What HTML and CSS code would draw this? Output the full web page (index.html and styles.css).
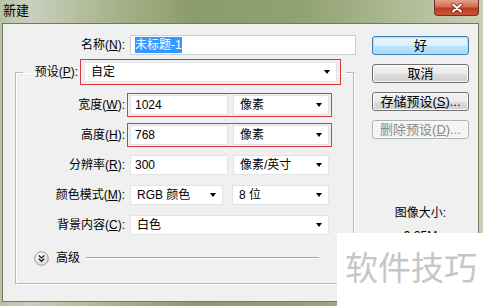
FILE: index.html
```html
<!DOCTYPE html>
<html lang="zh">
<head>
    <meta charset="UTF-8">
    <title>新建</title>
    <link rel="stylesheet" href="styles.css">
</head>
<body>
    <div class="window">
        <div class="titlebar">
            <span class="title">新建</span>
            <div class="close">
                <svg width="14" height="10" viewBox="0 0 14 10">
                    <path d="M3 1.5 L11 8.5 M11 1.5 L3 8.5" stroke="#5a2418" stroke-width="3.4" stroke-linecap="round"/>
                    <path d="M3 1.5 L11 8.5 M11 1.5 L3 8.5" stroke="#fff" stroke-width="2" stroke-linecap="round"/>
                </svg>
            </div>
        </div>

        <div class="client">
            <div class="left">
                <div class="row name-row">
                    <span class="lbl">名称(<u>N</u>):</span>
                    <div class="box">
                        <div class="field name-field"><span class="sel">未标题-1</span></div>
                    </div>
                </div>

                <!-- Preset group -->
                <fieldset class="group">
                    <legend>
                        <span class="lbl preset-lbl">预设(<u>P</u>):</span>
                        <span class="box red legend-box">
                            <span class="combo preset">自定<i class="arrow"></i></span>
                        </span>
                    </legend>

                    <div class="row">
                        <span class="lbl">宽度(<u>W</u>):</span>
                        <div class="box red">
                            <div class="field num">1024</div>
                            <div class="combo unit">像素<i class="arrow"></i></div>
                        </div>
                    </div>
                    <div class="row">
                        <span class="lbl">高度(<u>H</u>):</span>
                        <div class="box red">
                            <div class="field num">768</div>
                            <div class="combo unit">像素<i class="arrow"></i></div>
                        </div>
                    </div>
                    <div class="row">
                        <span class="lbl">分辨率(<u>R</u>):</span>
                        <div class="box">
                            <div class="field num">300</div>
                            <div class="combo unit">像素/英寸<i class="arrow"></i></div>
                        </div>
                    </div>
                    <div class="row">
                        <span class="lbl">颜色模式(<u>M</u>):</span>
                        <div class="box">
                            <div class="combo mode">RGB 颜色<i class="arrow"></i></div>
                            <div class="combo bits">8 位<i class="arrow"></i></div>
                        </div>
                    </div>
                    <div class="row">
                        <span class="lbl">背景内容(<u>C</u>):</span>
                        <div class="box">
                            <div class="combo background">白色<i class="arrow"></i></div>
                        </div>
                    </div>

                    <div class="advanced">
                        <svg width="15" height="15" viewBox="0 0 15 15">
                            <defs>
                                <radialGradient id="knob" cx="0.4" cy="0.35" r="0.7">
                                    <stop offset="0" stop-color="#ffffff"/>
                                    <stop offset="1" stop-color="#d6d6d6"/>
                                </radialGradient>
                            </defs>
                            <circle cx="7.5" cy="7.5" r="6.8" fill="url(#knob)" stroke="#9c9c9c"/>
                            <path d="M4.8 4.6 L7.5 7 L10.2 4.6 M4.8 7.8 L7.5 10.2 L10.2 7.8" fill="none" stroke="#222" stroke-width="1.4"/>
                        </svg>
                        <span class="adv-text">高级</span>
                        <span class="adv-line"></span>
                    </div>
                </fieldset>
            </div>

            <div class="right">
                <button class="btn default">好</button>
                <button class="btn">取消</button>
                <button class="btn">存储预设(<u>S</u>)...</button>
                <button class="btn" disabled>删除预设(<u>D</u>)...</button>

                <div class="size-info">
                    <div>图像大小:</div>
                    <div class="size-value">9.25M</div>
                </div>
            </div>
        </div>

        <div class="watermark">软件技巧</div>
    </div>
</body>
</html>
```

FILE: styles.css
```css
body {
    margin: 0;
    font-family: "Liberation Sans", "Noto Sans CJK SC", sans-serif;
    font-size: 12px;
    color: #000;
    background: #fff;
}
.window {
    position: relative;
    width: 483px;
    height: 306px;
    box-sizing: border-box;
    padding: 0 4px 4px 2px;
    display: flex;
    flex-direction: column;
    overflow: hidden;
    background: linear-gradient(to right, #b8c2a6 0%, #c9cfbd 6%, #aab68f 22%, #8c9b6a 40%, #91a171 62%, #b1bd97 85%, #c8d0b8 100%);
}

/* Title bar */
.titlebar {
    height: 23px;
    flex: none;
    display: flex;
    justify-content: space-between;
    padding-left: 1px;
}
.title {
    font-size: 13px;
    line-height: 22px;
}
.close {
    width: 43px;
    height: 15px;
    margin-right: 0;
    border: 1px solid #6b3326;
    border-top: none;
    border-radius: 0 0 4px 4px;
    background: linear-gradient(#e3a08e 0%, #d36d52 45%, #bd3c20 55%, #c9533a 100%);
    display: flex;
    align-items: center;
    justify-content: center;
}

/* Client area */
.client {
    flex: 1;
    display: flex;
    border: 1px solid #6e7b5c;
    background: #f0f0f0;
    padding-top: 9px;
}
.left {
    width: 344px;
    padding-left: 12px;
}
.right {
    padding: 3px 0 0 13px;
    width: 97px;
}

/* Rows */
.row {
    display: flex;
    align-items: center;
    margin-bottom: 6px;
}
.lbl {
    width: 109px;
    padding-right: 2px;
    text-align: right;
    line-height: 16px;
    flex: none;
}
.name-row .lbl {
    width: 110px;
}
.name-row {
    margin-bottom: 2px;
}
.box {
    display: flex;
    border: 1px solid transparent;
    padding: 1px 2px;
}
.box.red {
    border-color: #d23c3c;
}
.field,
.combo {
    height: 20px;
    box-sizing: border-box;
    background: #fff;
    border: 1px solid #e1e3e6;
    line-height: 18px;
    padding-left: 4px;
}
.name-field {
    width: 226px;
    border-color: #c5d0da;
}
.sel {
    background: #3399ff;
    color: #fff;
    padding: 1px 0;
}
.num {
    width: 98px;
}
.combo {
    position: relative;
    padding-left: 6px;
}
.arrow {
    position: absolute;
    right: 6px;
    top: 7px;
    border-left: 3.5px solid transparent;
    border-right: 3.5px solid transparent;
    border-top: 4px solid #000;
}
.unit {
    width: 96px;
    margin-left: 5px;
}
.mode {
    width: 93px;
}
.bits {
    width: 97px;
    margin-left: 9px;
}
.background {
    width: 199px;
}

/* Preset group box */
.group {
    width: 339px;
    box-sizing: border-box;
    margin: 0;
    padding: 0 0 17px 0;
    border: 1px solid #b9b9b9;
    box-shadow: 1px 1px 0 #fff, inset 1px 1px 0 #fff;
}
.group legend {
    display: flex;
    align-items: center;
    margin-left: 7px;
    padding: 0 5px 0 0;
}
.preset-lbl {
    width: 55px;
}
.legend-box {
    padding: 2px 3px;
}
.preset {
    width: 253px;
}
.group .row:first-of-type {
    margin-top: 8px;
}

/* Advanced toggle */
.advanced {
    display: flex;
    align-items: center;
    margin-top: 13px;
    padding-left: 18px;
    padding-right: 34px;
}
.adv-text {
    margin-left: 7px;
    line-height: 16px;
}
.adv-line {
    flex: 1;
    height: 1px;
    margin-left: 6px;
    margin-top: -2px;
    background: #a7a7a7;
    box-shadow: 0 1px 0 #fff;
}

/* Buttons */
.btn {
    display: block;
    width: 97px;
    height: 19px;
    margin: 0 0 9px 0;
    padding: 0;
    font-family: inherit;
    font-size: 13px;
    line-height: 16px;
    color: #000;
    border: 1px solid #707070;
    border-radius: 3px;
    background: linear-gradient(#f2f2f2 0%, #ebebeb 50%, #dddddd 51%, #cfcfcf 100%);
    box-shadow: inset 0 0 0 1px #fbfbfb;
}
.btn.default {
    border-color: #3c7fb1;
    background: linear-gradient(#eaf6fd 0%, #d9f0fc 50%, #bee6fd 51%, #a7d9f5 100%);
    box-shadow: inset 0 0 0 1px #b4e0f7;
}
.btn:disabled {
    color: #8a8a8a;
    border-color: #adb2b5;
    background: #f4f4f4;
}

.size-info {
    margin-top: 67px;
    text-align: center;
    line-height: 14px;
}
.size-value {
    margin-top: 9px;
}

/* Watermark over the corner */
.watermark {
    position: absolute;
    left: 337px;
    top: 233px;
    right: 0;
    bottom: 0;
    background: #fff;
    color: #c6c6c6;
    font-family: "Noto Sans CJK SC", sans-serif;
    font-size: 33px;
    line-height: 1;
    padding: 17px 0 0 8px;
    white-space: nowrap;
}
```
